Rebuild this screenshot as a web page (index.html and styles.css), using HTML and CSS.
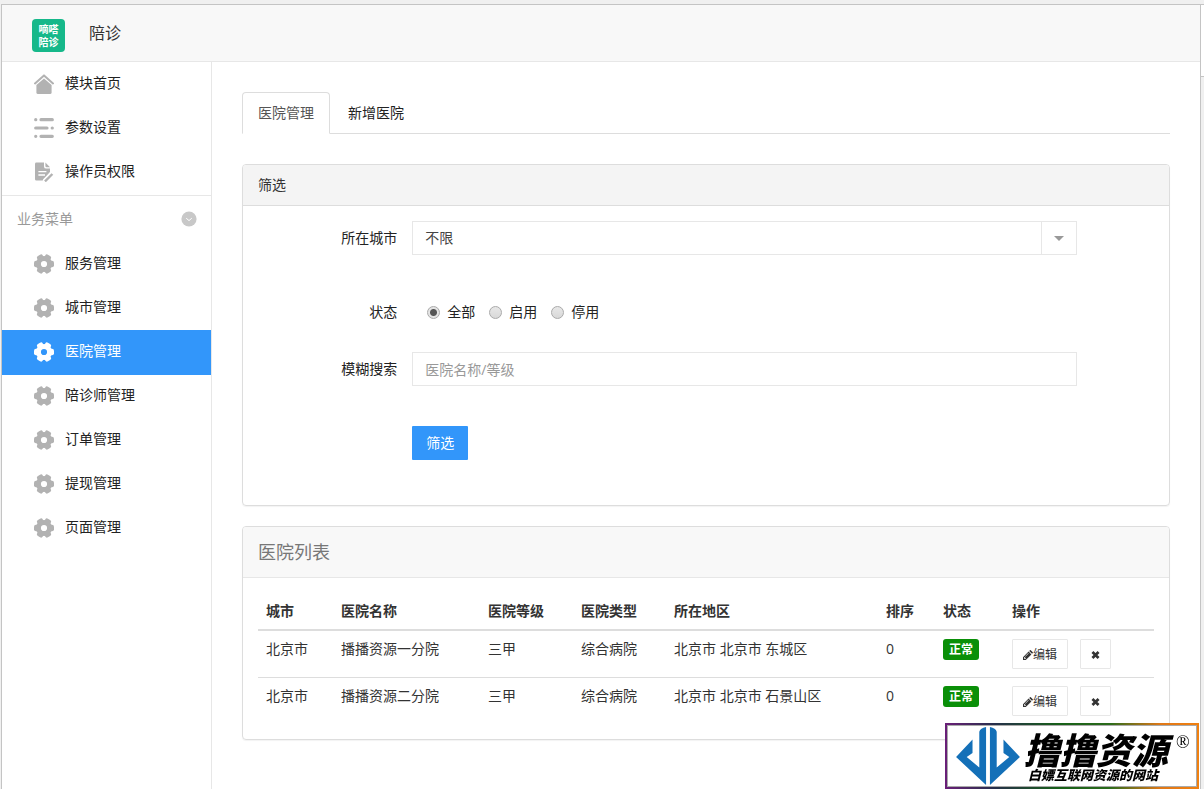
FILE: index.html
```html
<!DOCTYPE html>
<html lang="zh-CN">
<head>
<meta charset="utf-8">
<title>医院管理</title>
<link rel="stylesheet" href="styles.css">
</head>
<body>
<svg class="defs" aria-hidden="true">
  <symbol id="gear" viewBox="0 0 20 20">
    <circle cx="10" cy="10" r="5.6" fill="none" stroke="currentColor" stroke-width="5"/>
    <g fill="currentColor">
      <rect x="0" y="6.8" width="6.5" height="6.4" rx="2"/>
      <rect x="0" y="6.8" width="6.5" height="6.4" rx="2" transform="rotate(60 10 10)"/>
      <rect x="0" y="6.8" width="6.5" height="6.4" rx="2" transform="rotate(120 10 10)"/>
      <rect x="0" y="6.8" width="6.5" height="6.4" rx="2" transform="rotate(180 10 10)"/>
      <rect x="0" y="6.8" width="6.5" height="6.4" rx="2" transform="rotate(240 10 10)"/>
      <rect x="0" y="6.8" width="6.5" height="6.4" rx="2" transform="rotate(300 10 10)"/>
    </g>
  </symbol>
  <symbol id="pencil" viewBox="0 0 10 10">
    <path fill="currentColor" fill-rule="evenodd" d="M0 10V7.2L5.6 1.6 8.4 4.4 2.8 10ZM6.2 1 7 .2Q7.4-.1 7.8.2L9.8 2.2Q10.1 2.6 9.8 3L9 3.8ZM1 7.7V8.4H1.6V9H2.3L2.9 8.4 1.6 7.1ZM2.3 6.7 5.6 3.4 5.3 3.1 2 6.4Z"/>
  </symbol>
  <symbol id="cross" viewBox="0 0 10 10">
    <path d="M1.6 1.6 8.4 8.4M8.4 1.6 1.6 8.4" fill="none" stroke="currentColor" stroke-width="3"/>
  </symbol>
</svg>
<div class="window">
  <div class="app">
    <header class="topbar">
      <div class="logo"><span>嘀嗒</span><span>陪诊</span></div>
      <span class="app-name">陪诊</span>
    </header>
    <div class="layout">
      <nav class="sidebar">
        <div class="menu menu-top">
          <a class="item" href="#"><svg class="icon" viewBox="0 0 20 20"><path d="M1 9.4 10 1.4 19 9.4" fill="none" stroke="currentColor" stroke-width="2" stroke-linecap="round" stroke-linejoin="round"/><path fill="currentColor" d="M10 4.4 17.6 11V18.4Q17.6 20 16 20H4Q2.4 20 2.4 18.4V11Z"/></svg>模块首页</a>
          <a class="item" href="#"><svg class="icon" viewBox="0 0 20 20"><g stroke="currentColor" stroke-width="3.2" stroke-linecap="round"><path d="M1.7 1.7h.1M7 1.7H18.3M1.7 10H13M18.2 10h.1M1.7 18.3h.1M7 18.3H18.3"/></g></svg>参数设置</a>
          <a class="item" href="#"><svg class="icon" viewBox="0 0 20 20"><path fill="currentColor" d="M1 2Q1 .6 2.4.6H10V4.4Q10 6.6 12.2 6.6H16V10L8.6 18.6H2.4Q1 18.6 1 17.2ZM11.4.6 16 5.2H12.6Q11.4 5.2 11.4 4Z"/><path d="M4.4 9.6H12.4M4.4 13H11" stroke="#fff" stroke-width="1.4"/><path d="M10.4 19 17.6 11.6" stroke="#fff" stroke-width="4"/><path d="M11 19.4 18.4 12" stroke="currentColor" stroke-width="2.4"/></svg>操作员权限</a>
        </div>
        <div class="group-head">
          <span>业务菜单</span>
          <svg class="toggle" viewBox="0 0 16 16"><circle cx="8" cy="8" r="7.6" fill="#c8c8c8"/><path d="M5.2 7.2 8 9.6 10.8 7.2" fill="none" stroke="#fff" stroke-width="1"/></svg>
        </div>
        <div class="menu">
          <a class="item" href="#"><svg class="icon"><use href="#gear"/></svg>服务管理</a>
          <a class="item" href="#"><svg class="icon"><use href="#gear"/></svg>城市管理</a>
          <a class="item active" href="#" aria-current="page"><svg class="icon"><use href="#gear"/></svg>医院管理</a>
          <a class="item" href="#"><svg class="icon"><use href="#gear"/></svg>陪诊师管理</a>
          <a class="item" href="#"><svg class="icon"><use href="#gear"/></svg>订单管理</a>
          <a class="item" href="#"><svg class="icon"><use href="#gear"/></svg>提现管理</a>
          <a class="item" href="#"><svg class="icon"><use href="#gear"/></svg>页面管理</a>
        </div>
      </nav>
      <main class="content">
        <div class="tabs">
          <a class="tab current" href="#">医院管理</a>
          <a class="tab" href="#">新增医院</a>
        </div>
        <section class="panel filter">
          <div class="panel-head">筛选</div>
          <form class="filter-form">
            <div class="row row-city">
              <label for="city">所在城市</label>
              <div class="field select-box">
                <select id="city"><option>不限</option></select>
                <span class="select-arrow"><svg viewBox="0 0 10 5"><path d="M0 0H10L5 5Z" fill="#999"/></svg></span>
              </div>
            </div>
            <div class="row row-status" role="radiogroup" aria-labelledby="status-label">
              <span class="row-label" id="status-label">状态</span>
              <div class="field radios">
                <label><input type="radio" name="status" checked>全部</label>
                <label><input type="radio" name="status">启用</label>
                <label><input type="radio" name="status">停用</label>
              </div>
            </div>
            <div class="row row-keyword">
              <label for="keyword">模糊搜索</label>
              <div class="field"><input class="text" id="keyword" type="text" placeholder="医院名称/等级"></div>
            </div>
            <div class="row">
              <span></span>
              <div class="field"><button class="primary" type="button">筛选</button></div>
            </div>
          </form>
        </section>
        <section class="panel">
          <h2 class="panel-title">医院列表</h2>
          <div class="table-wrap">
            <table>
              <colgroup><col class="c-city"><col class="c-name"><col class="c-kind"><col class="c-kind"><col class="c-area"><col class="c-sort"><col class="c-state"><col class="c-action"></colgroup>
              <thead>
                <tr><th>城市</th><th>医院名称</th><th>医院等级</th><th>医院类型</th><th>所在地区</th><th>排序</th><th>状态</th><th>操作</th></tr>
              </thead>
              <tbody>
                <tr><td>北京市</td><td>播播资源一分院</td><td>三甲</td><td>综合病院</td><td>北京市 北京市 东城区</td><td>0</td><td><span class="badge">正常</span></td>
                  <td><div class="actions"><button class="small" type="button"><svg><use href="#pencil"/></svg>编辑</button><button class="small remove" type="button" aria-label="删除"><svg><use href="#cross"/></svg></button></div></td></tr>
                <tr><td>北京市</td><td>播播资源二分院</td><td>三甲</td><td>综合病院</td><td>北京市 北京市 石景山区</td><td>0</td><td><span class="badge">正常</span></td>
                  <td><div class="actions"><button class="small" type="button"><svg><use href="#pencil"/></svg>编辑</button><button class="small remove" type="button" aria-label="删除"><svg><use href="#cross"/></svg></button></div></td></tr>
              </tbody>
            </table>
          </div>
        </section>
      </main>
    </div>
  </div>
  <div class="edge"></div>
</div>
<aside class="brand">
  <div class="brand-inner">
    <svg class="brand-mark" viewBox="0 0 66 62">
      <g fill="#1470b8">
        <path d="M17 14V28L11 32 24 43V6Q25 2 31 1V61L0 32Z"/>
        <path d="M49 14V28L55 32 42 43V6Q41 2 35 1V61L66 32Z"/>
      </g>
    </svg>
    <div class="brand-text">
      <strong>撸撸资源</strong>
      <span>白嫖互联网资源的网站</span>
    </div>
    <sup>®</sup>
  </div>
</aside>
</body>
</html>
```
FILE: styles.css
```css
* { box-sizing: border-box; }
body {
  margin: 0;
  background: #f0f0f0;
  color: #333;
  font: 14px/20px "Open Sans", "Noto Sans CJK SC", sans-serif;
}
a { color: #222; text-decoration: none; }
button, input, select { font: inherit; color: inherit; }
.defs { display: none; }

.window {
  display: flex;
  min-height: 100vh;
  padding: 4px 0 0 1px;
}
.app {
  flex: 1;
  display: flex;
  flex-direction: column;
  border: 1px solid #c4c4c4;
  border-bottom: 0;
  background: #fff;
}
.edge { width: 3px; border-top: 1px solid #c4c4c4; }
.edge::before {
  content: "";
  display: block;
  height: 71px;
  border-bottom: 1px solid #c4c4c4;
  background: #fff;
}

.topbar {
  display: flex;
  align-items: center;
  gap: 24px;
  height: 57px;
  padding: 4px 30px 0;
  border-bottom: 1px solid #e7e7e7;
  background: #f8f8f8;
}
.logo {
  display: flex;
  flex-direction: column;
  justify-content: center;
  width: 33px;
  height: 33px;
  padding-top: 1px;
  border-radius: 4px;
  background: #16b88a;
  color: #fff;
  font-size: 10px;
  font-weight: 700;
  line-height: 13px;
  text-align: center;
}
.app-name { padding-bottom: 4px; font-size: 16px; }

.layout { flex: 1; display: flex; }
.sidebar { width: 210px; border-right: 1px solid #e7e7e7; }
.menu-top { padding-bottom: 1px; border-bottom: 1px solid #e7e7e7; }
.item {
  display: flex;
  align-items: center;
  gap: 11px;
  height: 44px;
  padding: 0 32px 2px;
}
.icon { width: 20px; height: 20px; margin-top: 2px; color: #b2b2b2; }
.item.active { background: #3296fa; box-shadow: 0 1px #3296fa; color: #fff; }
.item.active .icon { color: #fff; }
.group-head {
  display: flex;
  align-items: center;
  justify-content: space-between;
  height: 46px;
  padding: 0 14px 0 15px;
  color: #999;
}
.toggle { width: 16px; height: 16px; }

.content { flex: 1; min-width: 0; padding: 30px; }
.tabs {
  display: flex;
  gap: 2px;
  margin-bottom: 30px;
  border-bottom: 1px solid #ddd;
}
.tab {
  margin-bottom: -1px;
  padding: 10px 15px;
  border: 1px solid transparent;
  border-radius: 4px 4px 0 0;
}
.tab.current { border-color: #ddd #ddd #fff; color: #555; background: #fff; }

.panel {
  border: 1px solid #ddd;
  border-radius: 4px;
  box-shadow: 0 1px 1px rgba(0, 0, 0, .05);
}
.filter { margin-bottom: 20px; }
.panel-head {
  padding: 10px 15px;
  border-bottom: 1px solid #ddd;
  border-radius: 3px 3px 0 0;
  background: #f4f4f4;
}
.filter-form { padding: 15px 0 45px; }
.row {
  display: grid;
  grid-template-columns: 2fr 9fr 1fr;
  align-items: center;
}
.row > label, .row-label { text-align: right; color: #222; }
.row-city, .row-keyword { margin-bottom: 40px; }
.row-status { margin-bottom: 23px; }
.field { display: flex; align-items: center; height: 34px; margin: 0 15px; }
.select-box { display: grid; }
.select-box select, .select-arrow { grid-area: 1 / 1; }
.select-box select {
  width: 100%;
  height: 34px;
  padding: 0 48px 0 12px;
  border: 1px solid #e7e7e7;
  border-radius: 0;
  background: #fff;
  color: #444;
  appearance: none;
}
.select-arrow {
  display: flex;
  align-items: center;
  justify-content: center;
  justify-self: end;
  width: 36px;
  height: 34px;
  border-left: 1px solid #e7e7e7;
  pointer-events: none;
}
.select-arrow svg { width: 10px; height: 5px; }
.radios { gap: 14px; padding-left: 15px; color: #222; }
.radios label { display: flex; align-items: center; gap: 7px; }
.radios input {
  width: 13px;
  height: 13px;
  margin: 0;
  border: 1px solid #aaa;
  border-radius: 50%;
  background: linear-gradient(#e8e8e8, #d8d8d8);
  appearance: none;
}
.radios input:checked { background: radial-gradient(circle, #555 3px, #e4e4e4 4px); }
.text {
  width: 100%;
  height: 34px;
  padding: 0 12px;
  border: 1px solid #e7e7e7;
  background: #fff;
}
.text::placeholder { color: #999; opacity: 1; }
.primary {
  height: 34px;
  padding: 0 14px;
  border: 0;
  border-radius: 1px;
  background: #3296fa;
  color: #fff;
}

.panel-title {
  margin: 0;
  padding: 15px;
  border-bottom: 1px solid #e7e7e7;
  border-radius: 3px 3px 0 0;
  background: #f8f8f8;
  color: #777;
  font-size: 18px;
  font-weight: 400;
  line-height: 20px;
}
.table-wrap { padding: 15px; }
table { width: 100%; border-collapse: separate; border-spacing: 0; table-layout: fixed; }
.c-city { width: 75px; }
.c-name { width: 147px; }
.c-kind { width: 93px; }
.c-area { width: 212px; }
.c-sort { width: 57px; }
.c-state { width: 69px; }
.c-action { width: 150px; }
th, td { padding: 8px; text-align: left; vertical-align: top; }
th { border-bottom: 2px solid #ddd; font-weight: 700; }
tbody tr + tr td { border-top: 1px solid #ddd; }
.badge {
  display: inline-block;
  padding: 0 6px;
  border-radius: 3px;
  background: #0a8f08;
  color: #fff;
  font-size: 12px;
  font-weight: 700;
  line-height: 21px;
  vertical-align: top;
}
.actions { display: flex; gap: 12px; }
.small {
  display: flex;
  align-items: center;
  height: 30px;
  padding: 2px 10px 0;
  border: 1px solid #e7e7e7;
  border-radius: 1px;
  background: #fff;
  font-size: 12px;
}
.small svg { width: 10px; height: 10px; }
.remove svg { width: 9px; }

.brand {
  position: fixed;
  right: 5px;
  bottom: 0;
  padding: 2px;
  background: linear-gradient(90deg, #6a1f78, #26304a 20%, #176018 45%, #2b6b1b 65%, #e07818 85%, #f08010);
}
.brand-inner {
  display: flex;
  gap: 3px;
  width: 250px;
  height: 62px;
  padding-left: 7px;
  border: 1px solid #aaa;
  background: #fff;
  color: #000;
}
.brand-mark { flex: none; width: 66px; height: 60px; }
.brand-text {
  display: flex;
  flex-direction: column;
  gap: 4px;
  width: 149px;
  padding-top: 6px;
  font-family: "Noto Sans CJK SC", sans-serif;
  font-style: italic;
  font-weight: 900;
  white-space: nowrap;
}
.brand-text strong { font-size: 36px; font-weight: 900; line-height: 32px; }
.brand-text span { padding-left: 4px; font-size: 13px; line-height: 14px; }
.brand sup { padding-top: 7px; font: 18px/18px "Liberation Serif", serif; }
```
